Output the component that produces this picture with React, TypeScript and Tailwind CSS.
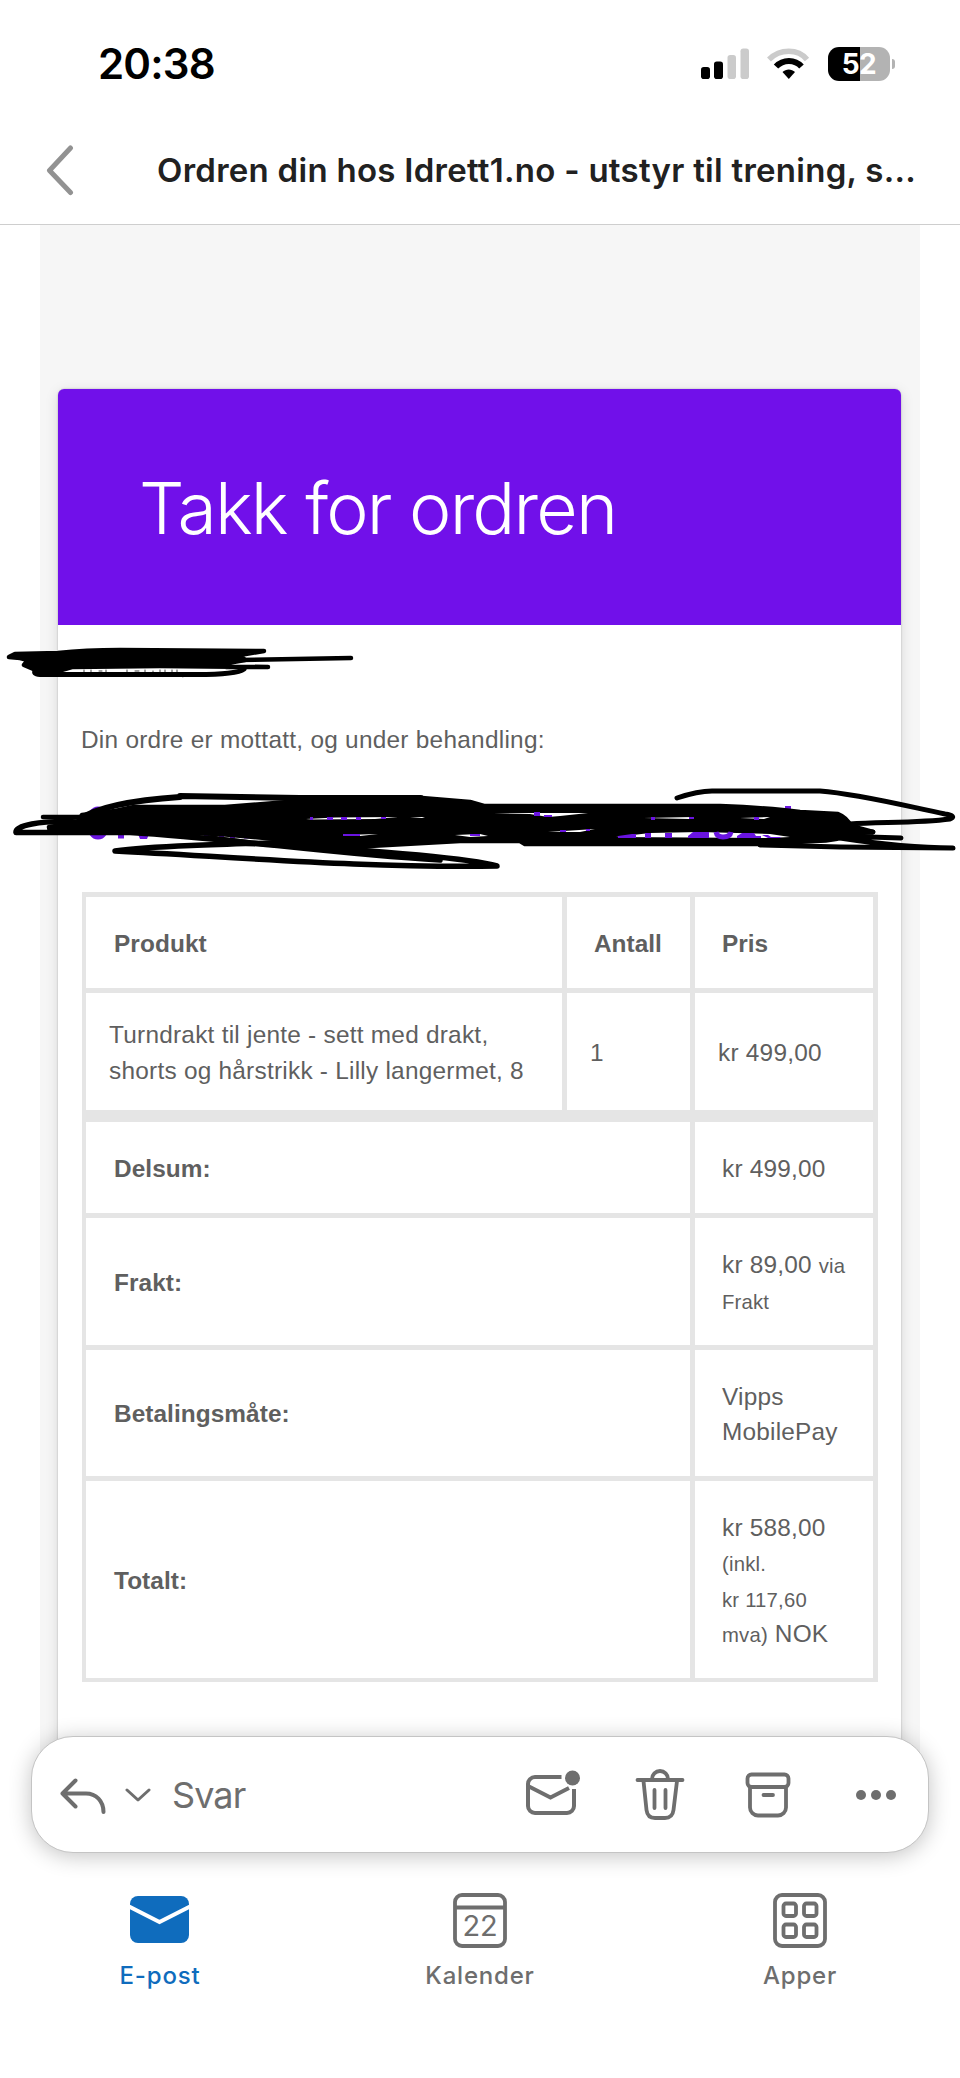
import type { ReactNode } from 'react';

interface TotalRow {
  label: string;
  height: string;
  value: ReactNode;
}

const TOTALS: TotalRow[] = [
  { label: 'Delsum:', height: 'h-[91px]', value: 'kr 499,00' },
  {
    label: 'Frakt:',
    height: 'h-[127px]',
    value: (
      <>
        kr 89,00 <Small>via</Small>
        <br />
        <Small>Frakt</Small>
      </>
    ),
  },
  {
    label: 'Betalingsmåte:',
    height: 'h-[126px]',
    value: (
      <>
        Vipps
        <br />
        MobilePay
      </>
    ),
  },
  {
    label: 'Totalt:',
    height: 'h-[197px]',
    value: (
      <>
        kr 588,00
        <br />
        <Small>(inkl.</Small>
        <br />
        <Small>kr 117,60</Small>
        <br />
        <Small>mva)</Small> NOK
      </>
    ),
  },
];

export default function App() {
  return (
    <div className="relative flex h-[2078px] w-[960px] flex-col overflow-hidden bg-white font-['Inter',sans-serif]">
      <StatusBar />
      <TitleBar />
      <Message />
      <Toolbar />
      <TabBar />
      <Scribbles />
    </div>
  );
}

function Small({ children }: { children: ReactNode }) {
  return <span className="text-[20.3px] leading-none">{children}</span>;
}

function StatusBar() {
  return (
    <header className="flex h-[128px] shrink-0 items-center justify-between pl-[98px] pr-[65px]">
      <span className="text-[42px] font-semibold leading-none tracking-[-0.8px] text-black">20:38</span>
      <div className="flex items-center">
        <svg width="50" height="34" viewBox="0 0 50 34">
          <rect x="1" y="20" width="9" height="12" rx="2.8" fill="#000" />
          <rect x="14" y="14.500" width="9" height="17.500" rx="2.800" fill="#000" />
          <rect x="27.500" y="8" width="8.500" height="24" rx="2.800" fill="#cbcbcb" />
          <rect x="40.500" y="1.500" width="8.500" height="30.500" rx="2.800" fill="#cbcbcb" />
        </svg>
        <svg className="ml-[16px]" width="44" height="34" viewBox="0 0 44 34" fill="none">
          <path d="M3 12.500C14 1.500 32 1.500 41 12.500" stroke="#cbcbcb" strokeWidth="5.500" />
          <path d="M10 19.500C17 12 29 12 35.500 19.500" stroke="#000" strokeWidth="6" />
          <path d="M16.500 25C20 21.500 25.500 21.500 29 25L22.800 32Z" fill="#000" />
        </svg>
        <div className="ml-[18px] flex h-[34px] w-[62px] items-center justify-center rounded-[11px] bg-[linear-gradient(90deg,#000_52%,#b3b3b3_52%)]">
          <span className="text-[28px] font-bold leading-none tracking-[-0.5px] text-white">52</span>
        </div>
        <span className="ml-[2px] h-[10px] w-[3px] rounded-r-full bg-[#b3b3b3]" />
      </div>
    </header>
  );
}

function TitleBar() {
  return (
    <div className="flex h-[97px] shrink-0 items-start border-b border-[#cecece] pl-[46px]">
      <svg className="mt-[16px]" width="28" height="52" viewBox="0 0 28 52" fill="none">
        <path d="M24.500 4L3.500 26.500L24.500 48.500" stroke="#929292" strokeWidth="5" strokeLinecap="round" strokeLinejoin="round" />
      </svg>
      <h1 className="ml-[83px] mt-[22px] whitespace-nowrap text-[33px] font-semibold leading-[40px] tracking-[0.27px] text-[#212121]">
        Ordren din hos Idrett1.no - utstyr til trening, s...
      </h1>
    </div>
  );
}

function Message() {
  return (
    <main className="mx-[40px] flex h-[1575px] shrink-0 flex-col bg-[#f6f6f6] pl-[18px] pr-[19px] pt-[164px] font-['Liberation_Sans',sans-serif] text-[24.4px] text-[#5f5f5f]">
      <div className="flex h-full flex-col rounded-t-[7px] bg-white shadow-[0_0_2px_#aaaaaa,0_3px_14px_rgba(0,0,0,0.13)]">
        <div className="flex h-[236px] shrink-0 items-center rounded-t-[6px] bg-[#7110ea] pl-[81px] pt-[3px]">
          <h2 className="font-['Inter',sans-serif] text-[71.5px] font-light leading-none tracking-[-1.8px] text-white">Takk for ordren</h2>
        </div>
        <p className="ml-[23px] mt-[97px] leading-[35px] tracking-[0.26px]">Din ordre er mottatt, og under behandling:</p>
        <OrderTable />
      </div>
    </main>
  );
}

function OrderTable() {
  return (
    <div className="ml-[24px] mt-[135px] flex w-[796px] shrink-0 flex-col gap-[5px] bg-[#e5e5e5] pb-[4px] pl-[4px] pr-[5px] pt-[5px] leading-[35.3px]">
      <div className="flex h-[91px] gap-[5px] font-bold">
        <div className="flex w-[476px] items-center bg-white pl-[28px] pt-[2px] tracking-[0.1px]">Produkt</div>
        <div className="flex w-[123px] items-center bg-white pl-[27px] pt-[2px]">Antall</div>
        <div className="flex flex-1 items-center bg-white pl-[27px] pt-[2px]">Pris</div>
      </div>
      <div className="mb-[7px] flex h-[117px] gap-[5px] tracking-[0.24px]">
        <div className="flex w-[476px] items-center bg-white pl-[23px] pt-[2px]">
          Turndrakt til jente - sett med drakt,
          <br />
          shorts og hårstrikk - Lilly langermet, 8
        </div>
        <div className="flex w-[123px] items-center bg-white pl-[23px] pt-[2px]">1</div>
        <div className="flex flex-1 items-center bg-white pl-[23px] pt-[2px]">kr 499,00</div>
      </div>
      {TOTALS.map((row) => (
        <div key={row.label} className={`flex gap-[5px] ${row.height}`}>
          <div className="flex w-[604px] items-center bg-white pl-[28px] pt-[2px] font-bold tracking-[0.06px]">{row.label}</div>
          <div className="flex flex-1 items-center bg-white pl-[27px] pt-[2px] tracking-[0.2px]">
            <p>{row.value}</p>
          </div>
        </div>
      ))}
    </div>
  );
}

function Toolbar() {
  return (
    <div className="absolute left-[31px] top-[1736px] flex h-[117px] w-[898px] items-center rounded-[42px] border border-[#c4c4c4] bg-white text-[#6e6e6e] shadow-[0_3px_22px_rgba(0,0,0,0.24)]">
      <svg className="ml-[27px]" width="48" height="38" viewBox="0 0 48 38" fill="none" stroke="currentColor" strokeWidth="4" strokeLinecap="round" strokeLinejoin="round">
        <path d="M16.500 4.500L3.500 17.500L16.500 30.500M3.500 17.500H27C37 17.500 44.500 25 44.500 36" />
      </svg>
      <svg className="ml-[18px]" width="26" height="16" viewBox="0 0 26 16" fill="none" stroke="currentColor" strokeWidth="3" strokeLinecap="round" strokeLinejoin="round">
        <path d="M2 3L13 13L24 3" />
      </svg>
      <span className="ml-[21px] text-[36px] leading-none tracking-[-0.9px]">Svar</span>
      <div className="ml-auto mr-[32px] flex items-center">
        <svg width="56" height="50" viewBox="0 0 56 50" fill="none" stroke="currentColor" strokeWidth="4">
          <path d="M36.500 7H10A7 7 0 0 0 3 14V36A7 7 0 0 0 10 43H42A7 7 0 0 0 49 36V19" />
          <path d="M3 16L25.500 27.500L44 18" />
          <circle cx="47.500" cy="8" r="7.500" fill="currentColor" stroke="none" />
        </svg>
        <svg className="ml-[54px]" width="50" height="52" viewBox="0 0 50 52" fill="none" stroke="currentColor" strokeWidth="3.800" strokeLinecap="round">
          <path d="M2.500 11H47.500M17 10A8 8 0 0 1 33 10" />
          <path d="M8.500 12L11.500 41Q12.500 49 20 49H30Q37.500 49 38.500 41L42 12M19.500 21V39M30.500 21V39" />
        </svg>
        <svg className="ml-[60px]" width="46" height="46" viewBox="0 0 46 46" fill="none" stroke="currentColor" strokeWidth="3.800">
          <rect x="2.500" y="2.500" width="41" height="12.500" rx="4" />
          <path d="M5 15V35.500A8 8 0 0 0 13 43.500H33A8 8 0 0 0 41 35.500V15" />
          <path d="M18.500 23H28" strokeLinecap="round" />
        </svg>
        <div className="ml-[65px] flex gap-[5px]">
          <span className="size-[10px] rounded-full bg-current" />
          <span className="size-[10px] rounded-full bg-current" />
          <span className="size-[10px] rounded-full bg-current" />
        </div>
      </div>
    </div>
  );
}

function TabBar() {
  return (
    <nav className="grid flex-1 grid-cols-3 pt-[91px] text-[24px] font-medium tracking-[0.8px] text-[#6e6e6e]">
      <div className="flex flex-col items-center text-[#0f6cbd]">
        <svg width="60" height="58" viewBox="0 0 60 58">
          <rect x="0" y="5" width="59" height="47" rx="8" fill="currentColor" />
          <path d="M-1 15.500L29.500 31L60 15.500" fill="none" stroke="#fff" strokeWidth="4" />
        </svg>
        <span className="mt-[12px] leading-[30px]">E-post</span>
      </div>
      <div className="flex flex-col items-center">
        <svg width="58" height="58" viewBox="0 0 58 58" fill="none" stroke="currentColor" strokeWidth="3.800">
          <rect x="4" y="4" width="50" height="51" rx="7" />
          <path d="M4 16.500H54" />
          <text x="29" y="45" textAnchor="middle" fontSize="29" fontWeight="400" letterSpacing="-0.3" fill="currentColor" stroke="none">
            22
          </text>
        </svg>
        <span className="mt-[12px] leading-[30px]">Kalender</span>
      </div>
      <div className="flex flex-col items-center">
        <svg width="58" height="58" viewBox="0 0 58 58" fill="none" stroke="currentColor" strokeWidth="3.800">
          <rect x="4" y="4" width="50" height="51" rx="7" />
          <rect x="12.500" y="12.500" width="12.500" height="12.500" rx="2.500" />
          <rect x="33" y="12.500" width="12.500" height="12.500" rx="2.500" />
          <rect x="12.500" y="33.500" width="12.500" height="12.500" rx="2.500" />
          <rect x="33" y="33.500" width="12.500" height="12.500" rx="2.500" />
        </svg>
        <span className="mt-[12px] leading-[30px]">Apper</span>
      </div>
    </nav>
  );
}

// Pen strokes that hide the greeting and the order number
function Scribbles() {
  return (
    <svg className="absolute left-0 top-[630px]" width="960" height="250" viewBox="0 630 960 250" fill="none" strokeLinecap="round" strokeLinejoin="round">
      <path d="M84 670v3M91 670v3M99 671h3M106 670v3M127 670v3M135 671h4M145 670v3M153 671v2M160 670v3M165 670v3M172 670v3M177 670v3M184 674l-1 3" stroke="#444" strokeWidth="1" />

      <g fill="#000" stroke="#000" strokeWidth="4.500">
        <path d="M15 654L58 653Q85 650 120 650L264 651L240 655L245 660L222 664L226 667H268L160 666L72 667L58 671L38 671L24 665L28 660L20 658L9 657Z" />
        <path d="M238 660L351 658" fill="none" />
        <path d="M244 669Q236 675 190 674.500H40Q32 674 36 670L66 668" fill="none" strokeWidth="5" />
      </g>

      {/* heading left between the strokes */}
      <g fill="#6a14e0">
        <ellipse cx="98" cy="823" rx="12" ry="16.500" />
        <path d="M118 830h6v8.500h-6zM138 834h11l-2 5h-7zM180 834h17l-3 5h-11zM204 834h5v4.500h-5zM219 834h5v4.500h-5zM230 834h5v4.500h-5zM244 834h5v4.500h-5zM275 835h6v4h-6z" />
        <path d="M534 812h6v6h-6zM544 815h8v4h-8zM785 806h6v8h-6z" />
      </g>

      <g fill="#000" stroke="#000" strokeWidth="4.500">
        <path d="M82 815L115 811L134 807H225Q275 803 312 800L422 798L470 802L484 806H720Q770 808 800 812L838 814Q846 817 851 826L873 832L850 834Q838 841 815 841L760 844H525L520 841H460L370 846L308 847V842L220 834L120 831L50 832L49 827L77 823Z" />
        <path d="M80 819Q105 802 180 797V796L300 798L421 798L422 803L470 803" fill="none" strokeWidth="6" />
        <path d="M43 817H90" fill="none" strokeWidth="4.500" />
        <path d="M80 822C38 820 15 826 16 832.500H130C230 838 330 854 440 860" fill="none" strokeWidth="5.500" />
        <path d="M304 842C230 844 150 846 115 851C250 858 370 868 497 866C470 858 370 850 250 843L210 838" fill="none" strokeWidth="5.500" />
        <path d="M677 798Q698 791 712 791H820C860 794 910 807 945 814Q957 816 950 819C920 823 880 822 850 824" fill="none" strokeWidth="5" />
        <path d="M845 831L873 832M836 836L901 838M840 838Q905 848 953 848L840 847L760 845" fill="none" strokeWidth="5" />
      </g>

      {/* slivers of paper and heading showing through */}
      <path d="M306 819L335 817.500L398 817L375 819L312 819.500Z" fill="#fff" />
      <path d="M310 817h3v3h-3zM327 817h6v3h-6zM341 817h6v3h-6zM356 817h5v3h-5zM381 817h5v2h-5z" fill="#6a14e0" />
      <path d="M410 818L422 817L425 818ZM345 835L378 834L360 836ZM455 835L480 834L488 836L470 837Z" fill="#fff" />
      <path d="M343 834h17v2h-17zM470 834h10v2h-10z" fill="#6a14e0" />
      <path d="M494 813L560 813L588 813L560 816L548 817L530 814Z" fill="#fff" />
      <path d="M534 812h6v4h-6zM544 815h8v2h-8z" fill="#6a14e0" />
      <path d="M644 818L694 817L690 819ZM740 818L770 817L764 819ZM548 832L595 829L580 832Z" fill="#fff" />
      <path d="M651 817h4v3h-4zM689 817h5v2h-5zM754 817h5v3h-5zM560 830h6v2h-6zM586 829h4v2h-4z" fill="#6a14e0" />
      <path d="M616 837L650 833L700 832L770 834L790 837L770 838Z" fill="#fff" />
      <path d="M618 836l14-2h4v4h-18zM645 833h6v5h-6zM665 833h7v5h-7zM688 838v-2l5-4h16v6zM737 838v-2l5-3h12l2 3h5v2zM762 835h6l3 2h10l-1 1h-12z" fill="#6a14e0" />
      <path d="M716 832Q717 837 723 837Q730 837 731 832" stroke="#6a14e0" strokeWidth="5" strokeLinecap="butt" />
    </svg>
  );
}
